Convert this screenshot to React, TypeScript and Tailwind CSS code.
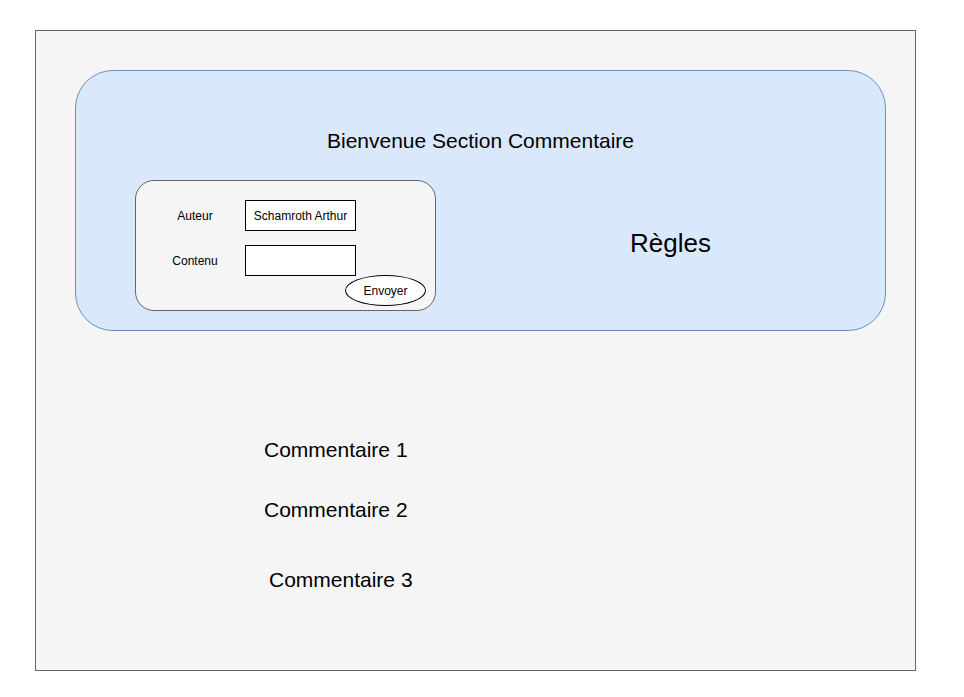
import React from 'react';

const font = { fontFamily: '"Liberation Sans", Arial, sans-serif' };

const FieldRow: React.FC<{ label: string; value?: string; className?: string }> = ({ label, value, className }) => (
  <div className={`flex items-center ${className ?? ''}`}>
    <div className="w-[80px] ml-[19px] text-center text-[12px] leading-none text-black">{label}</div>
    <div className="ml-[10px] w-[111px] h-[31px] border border-black bg-white flex items-center justify-center text-[12px] text-black">
      {value}
    </div>
  </div>
);

const comments = [
  { label: 'Commentaire 1', cls: 'mt-[107px] ml-[228px]' },
  { label: 'Commentaire 2', cls: 'mt-[36px] ml-[228px]' },
  { label: 'Commentaire 3', cls: 'mt-[46px] ml-[233px]' },
];

export default function App() {
  return (
    <div className="w-[964px] h-[697px] bg-white pt-[30px] pl-[35px]" style={font}>
      <div className="w-[881px] h-[641px] border border-[#666666] bg-[#f5f5f5] flex flex-col">
        {/* header card */}
        <div className="mt-[39px] ml-[39px] w-[811px] h-[261px] rounded-[38px] border border-[#6c8ebf] bg-[#dae8fc] flex flex-col">
          <h1 className="mt-[58px] h-[24px] leading-[24px] text-center text-[21px] text-black">
            Bienvenue Section Commentaire
          </h1>
          <div className="mt-[27px] flex items-center">
            {/* comment form */}
            <div className="ml-[59px] w-[301px] h-[131px] rounded-[19px] border border-[#666666] bg-[#f5f5f5] flex flex-col">
              <FieldRow label="Auteur" value="Schamroth Arthur" className="mt-[19px]" />
              <FieldRow label="Contenu" className="mt-[14px]" />
              <div className="-mt-[1px] flex justify-end pr-[9px]">
                <button className="w-[81px] h-[31px] rounded-[50%] border border-black bg-white text-[12px] text-black">
                  Envoyer
                </button>
              </div>
            </div>
            <div className="ml-[194px] mb-[5px] text-[26px] leading-none text-black">Règles</div>
          </div>
        </div>

        {comments.map(c => (
          <div key={c.label} className={`${c.cls} h-[24px] leading-[24px] text-[21px] text-black`}>
            {c.label}
          </div>
        ))}
      </div>
    </div>
  );
}
